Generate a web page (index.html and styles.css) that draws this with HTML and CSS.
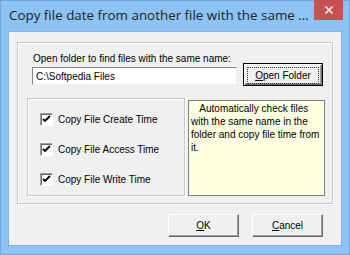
FILE: index.html
```html
<!DOCTYPE html>
<html lang="en">
<head>
  <meta charset="UTF-8" />
  <title>Copy file date</title>
  <link rel="stylesheet" href="styles.css">
</head>
<body>
  <div class="window">
    <div class="titlebar">
      <span class="title">Copy file date from another file with the same ...</span>
      <button class="close-btn">
        <svg width="10" height="10" viewBox="0 0 10 10"><path d="M1.5 1.5 L8.5 8.5 M8.5 1.5 L1.5 8.5" stroke="#fff" stroke-width="1.6"/></svg>
      </button>
    </div>

    <div class="client">
      <div class="group">
        <div class="folder-label">Open folder to find files with the same name:</div>
        <div class="folder-row">
          <div class="textbox">C:\Softpedia Files</div>
          <button class="btn btn-default"><span class="focus"><u>O</u>pen Folder</span></button>
        </div>

        <div class="options-row">
          <div class="options">
            <label class="check"><span class="box"><svg width="9" height="9" viewBox="0 0 9 9"><path d="M1 4 L3 6 L8 1" fill="none" stroke="#000" stroke-width="1.8"/></svg></span>Copy File Create Time</label>
            <label class="check"><span class="box"><svg width="9" height="9" viewBox="0 0 9 9"><path d="M1 4 L3 6 L8 1" fill="none" stroke="#000" stroke-width="1.8"/></svg></span>Copy File Access Time</label>
            <label class="check"><span class="box"><svg width="9" height="9" viewBox="0 0 9 9"><path d="M1 4 L3 6 L8 1" fill="none" stroke="#000" stroke-width="1.8"/></svg></span>Copy File Write Time</label>
          </div>
          <div class="note">&nbsp;&nbsp;&nbsp;Automatically check files with the same name in the folder and copy file time from it.</div>
        </div>
      </div>

      <div class="button-row">
        <button class="btn"><u>O</u>K</button>
        <button class="btn"><u>C</u>ancel</button>
      </div>
    </div>
  </div>
</body>
</html>
```

FILE: styles.css
```css
body {
  margin: 0;
  font-family: "Liberation Sans", Arial, sans-serif;
  font-size: 10px;
  color: #000;
}
.window {
  width: 350px;
  height: 255px;
  background-color: #8cc3f2;
  box-sizing: border-box;
  border: 1px solid #6fa9dc;
  display: flex;
  flex-direction: column;
}
.titlebar {
  height: 30px;
  display: flex;
  align-items: flex-start;
  justify-content: space-between;
}
.title {
  font-family: "Open Sans", sans-serif;
  font-size: 13.4px;
  color: #222;
  margin: 5px 0 0 8px;
  white-space: nowrap;
}
.close-btn {
  width: 29px;
  height: 20px;
  margin: -1px 6px 0 0;
  border: none;
  padding: 0;
  background-color: #c75050;
  display: flex;
  align-items: center;
  justify-content: center;
}
.client {
  flex: 1;
  margin: 0 7px 8px 7px;
  background-color: #f0f0f0;
  border: 1px solid #7fb4e3;
  padding: 10px 8px 0 8px;
}
.group {
  border: 1px solid #c8c8c8;
  box-shadow: inset 1px 1px #fff, 1px 1px #fff;
  height: 162px;
  box-sizing: border-box;
  padding: 9px 7px 0 9px;
}
.folder-label {
  margin-left: 6px;
  height: 13px;
  line-height: 13px;
}
.folder-row {
  display: flex;
  align-items: flex-start;
}
.textbox {
  width: 205px;
  height: 18px;
  box-sizing: border-box;
  margin: 2px 0 0 5px;
  background-color: #fff;
  border-top: 1px solid #828790;
  border-left: 1px solid #828790;
  border-right: 1px solid #f0f0f0;
  border-bottom: 1px solid #f0f0f0;
  padding: 2px 3px;
  line-height: 13px;
}
.btn {
  font-family: "Liberation Sans", Arial, sans-serif;
  font-size: 10px;
  color: #000;
  background-color: #f0f0f0;
  width: 71px;
  height: 23px;
  padding: 0;
  border: 1px solid;
  border-color: #fff #696969 #696969 #fff;
  box-shadow: inset -1px -1px #a0a0a0;
}
.folder-row .btn {
  width: 80px;
  margin-left: 6px;
  margin-top: -2px;
}
.btn-default {
  border-color: #000;
  box-shadow: inset 1px 1px #fff, inset -1px -1px #696969, inset -2px -2px #a0a0a0;
}
.focus {
  display: block;
  margin: 3px;
  padding: 2px 0;
  border: 1px dotted #333;
}
.options-row {
  display: flex;
  gap: 3px;
  margin-top: 12px;
}
.options {
  width: 158px;
  height: 98px;
  box-sizing: border-box;
  border: 1px solid #c8c8c8;
  box-shadow: inset 1px 1px #fff, 1px 1px #fff;
  padding: 14px 0 0 12px;
  display: flex;
  flex-direction: column;
  gap: 17px;
}
.check {
  display: flex;
  align-items: center;
  height: 13px;
  white-space: nowrap;
}
.box {
  width: 13px;
  height: 13px;
  box-sizing: border-box;
  border: 1px solid;
  border-color: #a0a0a0 #fff #fff #a0a0a0;
  box-shadow: inset 1px 1px #696969;
  background-color: #fff;
  display: flex;
  align-items: center;
  justify-content: center;
  margin-right: 5px;
}
.note {
  width: 137px;
  height: 96px;
  margin-top: 2px;
  box-sizing: border-box;
  background-color: #ffffe1;
  border: 1px solid #808080;
  padding: 1px 2px;
  line-height: 13px;
}
.button-row {
  display: flex;
  justify-content: flex-end;
  gap: 13px;
  margin: 10px 10px 0 0;
}
```
